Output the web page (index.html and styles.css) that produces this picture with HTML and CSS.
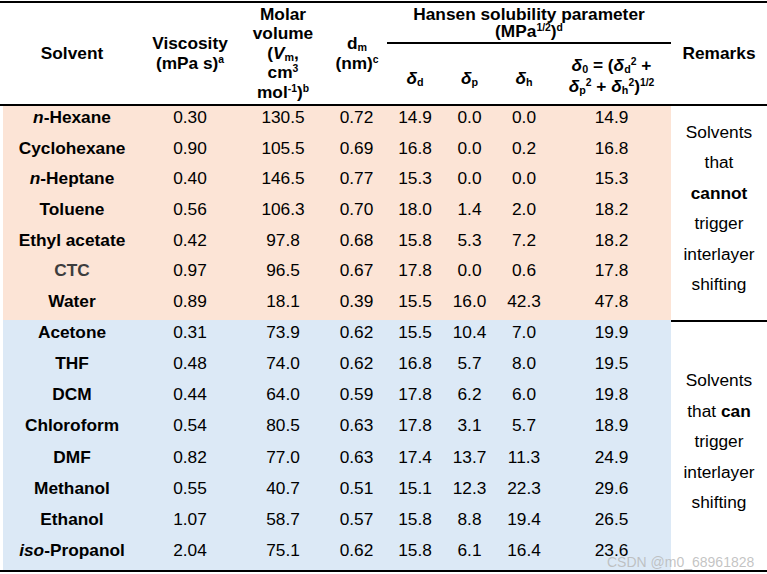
FILE: index.html
```html
<!DOCTYPE html>
<html>
<head>
<meta charset="utf-8">
<link rel="stylesheet" href="styles.css">
</head>
<body>
<div class="sheet">
  <div class="hd tall"><span>Solvent</span></div>
  <div class="hd tall"><span>Viscosity<br>(mPa s)<sup>a</sup></span></div>
  <div class="hd tall"><span>Molar<br>volume<br>(<i>V</i><sub>m</sub>,<br>cm<sup>3</sup><br>mol<sup>-1</sup>)<sup>b</sup></span></div>
  <div class="hd tall dm"><span>d<sub>m</sub><br>(nm)<sup>c</sup></span></div>
  <div class="hd hansen"><span>Hansen solubility parameter<br>(MPa<sup>1/2</sup>)<sup>d</sup></span></div>
  <div class="hd tall remh"><span>Remarks</span></div>
  <div class="hd delta"><span><i>δ</i><sub>d</sub></span></div>
  <div class="hd delta"><span><i>δ</i><sub>p</sub></span></div>
  <div class="hd delta"><span><i>δ</i><sub>h</sub></span></div>
  <div class="hd delta d0"><span><i>δ</i><sub>0</sub> = (<i>δ</i><sub>d</sub><sup>2</sup> +<br><i>δ</i><sub>p</sub><sup>2</sup> + <i>δ</i><sub>h</sub><sup>2</sup>)<sup>1/2</sup></span></div>

  <div class="row pk">
    <div class="c nm"><span><i>n</i>-Hexane</span></div><div class="c">0.30</div><div class="c">130.5</div><div class="c dmv">0.72</div><div class="c">14.9</div><div class="c">0.0</div><div class="c">0.0</div><div class="c">14.9</div>
    <div class="rem r1"><span>Solvents<br>that<br><b>cannot</b><br>trigger<br>interlayer<br>shifting</span></div>
  </div>
  <div class="row pk">
    <div class="c nm"><span>Cyclohexane</span></div><div class="c">0.90</div><div class="c">105.5</div><div class="c dmv">0.69</div><div class="c">16.8</div><div class="c">0.0</div><div class="c">0.2</div><div class="c">16.8</div>
  </div>
  <div class="row pk">
    <div class="c nm"><span><i>n</i>-Heptane</span></div><div class="c">0.40</div><div class="c">146.5</div><div class="c dmv">0.77</div><div class="c">15.3</div><div class="c">0.0</div><div class="c">0.0</div><div class="c">15.3</div>
  </div>
  <div class="row pk">
    <div class="c nm"><span>Toluene</span></div><div class="c">0.56</div><div class="c">106.3</div><div class="c dmv">0.70</div><div class="c">18.0</div><div class="c">1.4</div><div class="c">2.0</div><div class="c">18.2</div>
  </div>
  <div class="row pk">
    <div class="c nm"><span>Ethyl acetate</span></div><div class="c">0.42</div><div class="c">97.8</div><div class="c dmv">0.68</div><div class="c">15.8</div><div class="c">5.3</div><div class="c">7.2</div><div class="c">18.2</div>
  </div>
  <div class="row pk">
    <div class="c nm gray"><span>CTC</span></div><div class="c">0.97</div><div class="c">96.5</div><div class="c dmv">0.67</div><div class="c">17.8</div><div class="c">0.0</div><div class="c">0.6</div><div class="c">17.8</div>
  </div>
  <div class="row pk">
    <div class="c nm"><span>Water</span></div><div class="c">0.89</div><div class="c">18.1</div><div class="c dmv">0.39</div><div class="c">15.5</div><div class="c">16.0</div><div class="c">42.3</div><div class="c">47.8</div>
  </div>

  <div class="row bl">
    <div class="c nm"><span>Acetone</span></div><div class="c">0.31</div><div class="c">73.9</div><div class="c dmv">0.62</div><div class="c">15.5</div><div class="c">10.4</div><div class="c">7.0</div><div class="c">19.9</div>
    <div class="rem r2"><span>Solvents<br>that <b>can</b><br>trigger<br>interlayer<br>shifting</span></div>
  </div>
  <div class="row bl">
    <div class="c nm"><span>THF</span></div><div class="c">0.48</div><div class="c">74.0</div><div class="c dmv">0.62</div><div class="c">16.8</div><div class="c">5.7</div><div class="c">8.0</div><div class="c">19.5</div>
  </div>
  <div class="row bl">
    <div class="c nm"><span>DCM</span></div><div class="c">0.44</div><div class="c">64.0</div><div class="c dmv">0.59</div><div class="c">17.8</div><div class="c">6.2</div><div class="c">6.0</div><div class="c">19.8</div>
  </div>
  <div class="row bl">
    <div class="c nm"><span>Chloroform</span></div><div class="c">0.54</div><div class="c">80.5</div><div class="c dmv">0.63</div><div class="c">17.8</div><div class="c">3.1</div><div class="c">5.7</div><div class="c">18.9</div>
  </div>
  <div class="row bl">
    <div class="c nm"><span>DMF</span></div><div class="c">0.82</div><div class="c">77.0</div><div class="c dmv">0.63</div><div class="c">17.4</div><div class="c">13.7</div><div class="c">11.3</div><div class="c">24.9</div>
  </div>
  <div class="row bl">
    <div class="c nm"><span>Methanol</span></div><div class="c">0.55</div><div class="c">40.7</div><div class="c dmv">0.51</div><div class="c">15.1</div><div class="c">12.3</div><div class="c">22.3</div><div class="c">29.6</div>
  </div>
  <div class="row bl">
    <div class="c nm"><span>Ethanol</span></div><div class="c">1.07</div><div class="c">58.7</div><div class="c dmv">0.57</div><div class="c">15.8</div><div class="c">8.8</div><div class="c">19.4</div><div class="c">26.5</div>
  </div>
  <div class="row bl">
    <div class="c nm"><span><i>iso</i>-Propanol</span></div><div class="c">2.04</div><div class="c">75.1</div><div class="c dmv">0.62</div><div class="c">15.8</div><div class="c">6.1</div><div class="c">16.4</div><div class="c">23.6</div>
  </div>

  <div class="wm">CSDN @m0_68961828</div>
</div>
</body>
</html>
```
FILE: styles.css
```css
* { box-sizing: border-box; }
html, body { margin: 0; padding: 0; background: #fff; }
body {
  font-family: "Liberation Sans", Arial, sans-serif;
  color: #000;
}
.sheet {
  position: relative;
  margin-top: 1px;
  width: 767px;
  display: grid;
  grid-template-columns: 144px 92px 94px 57px 56px 53px 56px 119px 96px;
  grid-template-rows: 41px 62px repeat(7, 30.57px) repeat(8, 31.25px);
  border-top: 2px solid #000;
  border-bottom: 2px solid #000;
  font-size: 17.3px;
}
.row { display: contents; }
.hd, .c, .rem {
  display: flex;
  align-items: center;
  justify-content: center;
  text-align: center;
}
.hd > span, .c > span, .rem > span { display: block; }
.hd { font-weight: bold; line-height: 19.5px; }
.tall { grid-row: span 2; border-bottom: 2px solid #000; }
.hansen {
  grid-column: span 4;
  border-bottom: 2px solid #000;
  line-height: 17px;
  padding-top: 1px;
}
.delta { border-bottom: 2px solid #000; padding-top: 9px; }
.delta.d0 { line-height: 21px; padding-top: 4px; }
.dm { padding-right: 3px; }
.c { padding-bottom: 8px; line-height: 20px; }
.dmv { padding-right: 4px; }
.nm { font-weight: bold; box-shadow: inset 3px 0 0 #fff; }
.gray { color: #3d3d3d; }
.pk > .c { background: #fce4d6; }
.bl > .c { background: #dce9f6; }
.rem { background: #fff; line-height: 30.5px; padding-bottom: 9px; }
.r1 { grid-column: 9; grid-row: 3 / span 7; }
.r2 { grid-column: 9; grid-row: 10 / span 8; border-top: 2px solid #000; }
sup {
  font-size: 60%;
  line-height: 0;
  vertical-align: 0.6em;
}
sub {
  font-size: 62%;
  line-height: 0;
  vertical-align: -0.15em;
}
.wm {
  position: absolute;
  left: 607px;
  top: 551px;
  font-size: 14px;
  line-height: 16px;
  color: rgba(185, 185, 185, 0.85);
  white-space: nowrap;
}
```
